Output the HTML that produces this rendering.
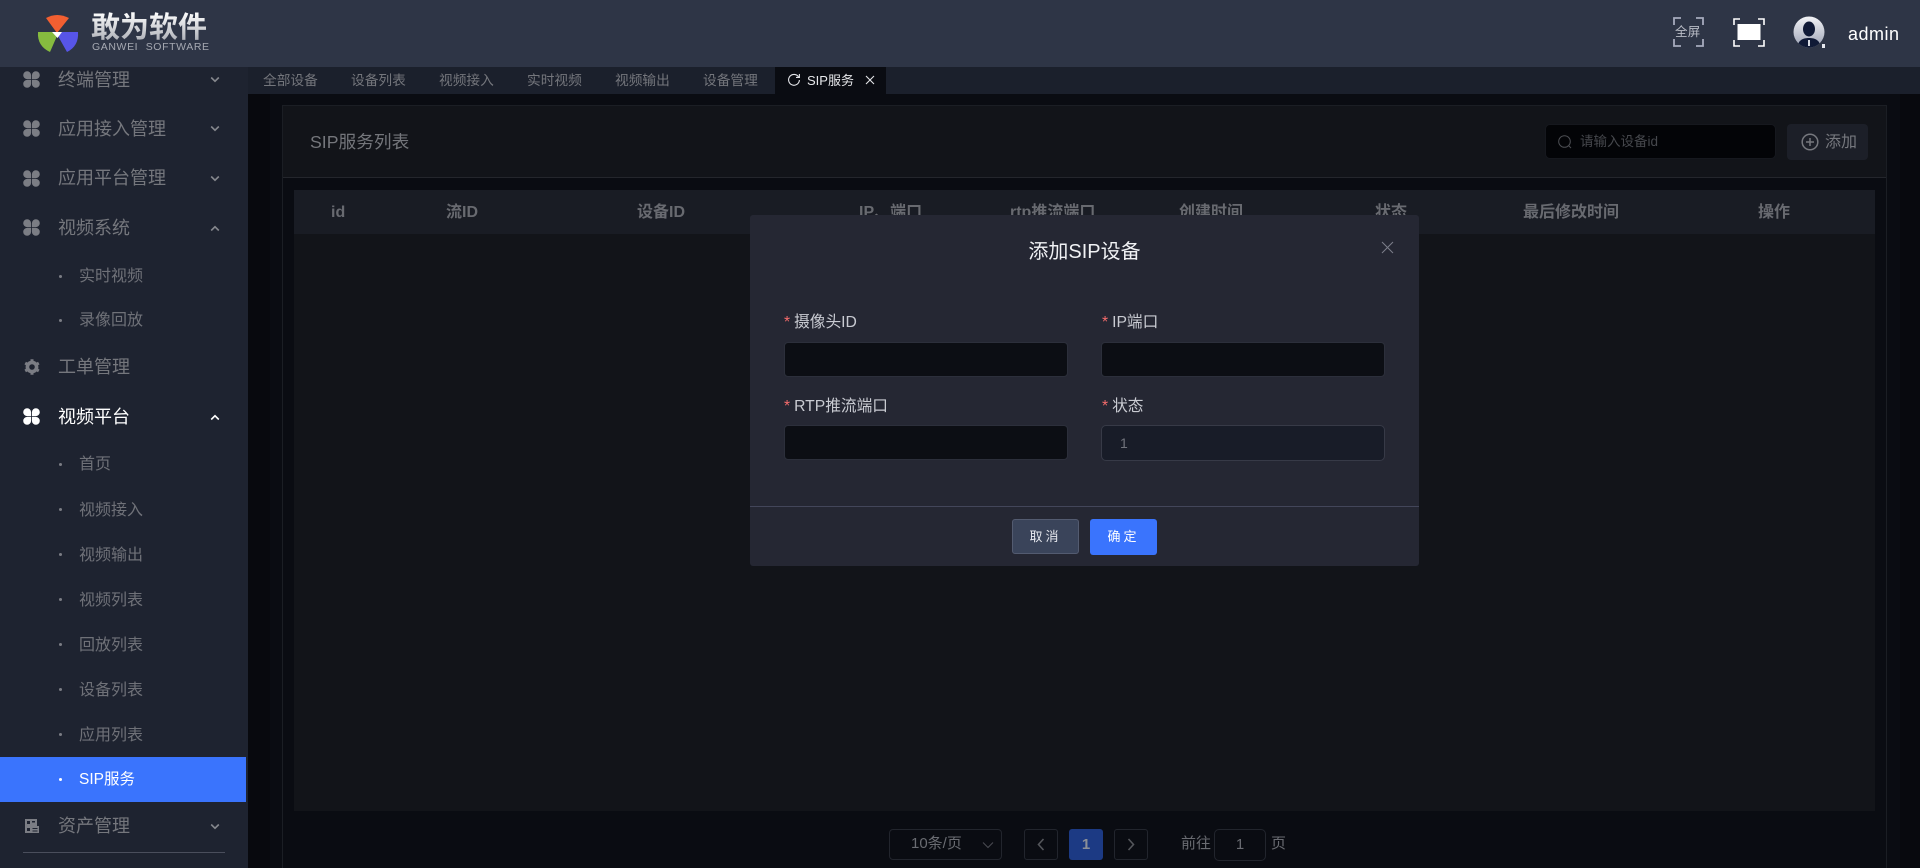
<!DOCTYPE html>
<html lang="zh-CN">
<head>
<meta charset="utf-8">
<title>SIP服务</title>
<style>
*{box-sizing:border-box;margin:0;padding:0}
html,body{width:1920px;height:868px;overflow:hidden;background:#0a0c12;font-family:"Liberation Sans","Noto Sans CJK SC",sans-serif}
.a{position:absolute;white-space:nowrap}
.t{position:absolute;white-space:nowrap;height:30px;line-height:30px}
#hd{left:0;top:0;width:1920px;height:67px;background:#2e3546}
#sb{left:0;top:67px;width:248px;height:801px;background:#1e2330}
#tb{left:248px;top:67px;width:1672px;height:27px;background:#1b202c}
.m{left:58px;font-size:18px;color:#75777d}
.s{left:79px;font-size:16px;color:#6f7178}
.dot{position:absolute;left:59px;width:3px;height:3px;border-radius:50%;background:#7b7d84}
.ic{position:absolute;left:23px;width:17px;height:17px}
.ch{position:absolute;left:210px;width:10px;height:7px}
.tab{font-size:13.7px;color:#74767c;top:66px}
.th{font-size:16px;font-weight:bold;color:#686a70;top:198px}
.lb{font-size:15.7px;color:#c9cbd2}
.lb i{color:#f56c6c;font-style:normal;margin-right:4px;font-family:"Liberation Sans",sans-serif}
.inp{position:absolute;width:284px;height:35px;background:#0c0e14;border:1px solid #2c2f3b;border-radius:4px}
</style>
</head>
<body>
<svg width="0" height="0" style="position:absolute">
<symbol id="cl" viewBox="0 0 16 16"><path d="M7.6 7.6H3.8A3.7 3.7 0 1 1 7.6 3.8ZM8.4 7.6V3.8A3.7 3.7 0 1 1 12.2 7.6ZM7.6 8.4V12.2A3.7 3.7 0 1 1 3.800 8.4ZM8.4 8.4H12.2A3.7 3.7 0 1 1 8.4 12.2Z" fill="currentColor"/></symbol>
<symbol id="dn" viewBox="0 0 10 7"><path d="M1.2 1.5 5 5.2 8.8 1.5" fill="none" stroke="currentColor" stroke-width="1.6"/></symbol>
<symbol id="up" viewBox="0 0 10 7"><path d="M1.2 5.5 5 1.8 8.8 5.5" fill="none" stroke="currentColor" stroke-width="1.6"/></symbol>
</svg>

<!-- main background -->
<div class="a" style="left:248px;top:94px;width:22px;height:774px;background:#08090e"></div>
<div class="a" style="left:1900px;top:94px;width:20px;height:774px;background:#08090e"></div>
<!-- card -->
<div class="a" style="left:282px;top:105px;width:1605px;height:763px;border:1px solid #1b1e24;border-bottom:0;background:#0a0c12"></div>
<div class="a" style="left:283px;top:106px;width:1603px;height:72px;background:#121419;border-bottom:1px solid #24262c"></div>
<div class="t" style="left:310px;top:127px;font-size:17.700px;color:#74767b">SIP服务列表</div>
<div class="a" style="left:1545px;top:124px;width:231px;height:35px;background:#030407;border:1px solid #16181e;border-radius:5px"></div>
<svg class="a" style="left:1557px;top:134px" width="16" height="16" viewBox="0 0 16 16"><circle cx="7.5" cy="7.5" r="5.8" fill="none" stroke="#4d4f54" stroke-width="1"/><path d="M11.8 11.8 14 14" stroke="#4d4f54" stroke-width="1"/></svg>
<div class="t" style="left:1580px;top:127px;font-size:13.5px;color:#46484d">请输入设备id</div>
<div class="a" style="left:1787px;top:124px;width:81px;height:36px;background:#1c1f28;border-radius:4px"></div>
<svg class="a" style="left:1801px;top:133px" width="18" height="18" viewBox="0 0 18 18"><circle cx="9" cy="9" r="7.8" fill="none" stroke="#76787e" stroke-width="1.5"/><path d="M9 5v8M5 9h8" stroke="#76787e" stroke-width="1.5"/></svg>
<div class="t" style="left:1825px;top:128px;font-size:16px;color:#76787e">添加</div>
<!-- table -->
<div class="a" style="left:294px;top:190px;width:1581px;height:44px;background:#191c24"></div>
<div class="a" style="left:294px;top:234px;width:1581px;height:577px;background:#121419"></div>
<div class="t th" style="left:331px">id</div>
<div class="t th" style="left:446px">流ID</div>
<div class="t th" style="left:637px">设备ID</div>
<div class="t th" style="left:859px">IP、端口</div>
<div class="t th" style="left:1010px">rtp推流端口</div>
<div class="t th" style="left:1179px">创建时间</div>
<div class="t th" style="left:1375px">状态</div>
<div class="t th" style="left:1523px">最后修改时间</div>
<div class="t th" style="left:1758px">操作</div>
<!-- pagination -->
<div class="a" style="left:889px;top:829px;width:113px;height:31px;border:1px solid #22252d;border-radius:4px"></div>
<div class="t" style="left:911px;top:829px;font-size:15px;color:#6a6c72">10条/页</div>
<svg class="a" style="left:982px;top:841px" width="12" height="8" viewBox="0 0 12 8"><path d="M1 1.500 6 6.500 11 1.500" fill="none" stroke="#4a4c52" stroke-width="1"/></svg>
<div class="a" style="left:1024px;top:829px;width:34px;height:31px;border:1px solid #22252d;border-radius:3px"></div>
<svg class="a" style="left:1036px;top:838px" width="10" height="13" viewBox="0 0 10 13"><path d="M7.5 1 2.5 6.5 7.5 12" fill="none" stroke="#54565b" stroke-width="1.6"/></svg>
<div class="a" style="left:1069px;top:829px;width:34px;height:31px;background:#1c3a84;border-radius:3px;text-align:center;line-height:31px;font-size:15px;font-weight:bold;color:#8b8f98">1</div>
<div class="a" style="left:1114px;top:829px;width:34px;height:31px;border:1px solid #22252d;border-radius:3px"></div>
<svg class="a" style="left:1126px;top:838px" width="10" height="13" viewBox="0 0 10 13"><path d="M2.5 1 7.5 6.5 2.5 12" fill="none" stroke="#54565b" stroke-width="1.6"/></svg>
<div class="t" style="left:1181px;top:829px;font-size:15px;color:#6a6c72">前往</div>
<div class="a" style="left:1214px;top:829px;width:52px;height:32px;border:1px solid #22252d;border-radius:5px;text-align:center;line-height:30px;font-size:15px;color:#6a6c72">1</div>
<div class="t" style="left:1271px;top:829px;font-size:15px;color:#6a6c72">页</div>

<!-- header -->
<div class="a" id="hd"></div>
<svg class="a" style="left:30px;top:8px" width="56" height="50" viewBox="30 8 56 50">
<path d="M57 33 46 18Q57 12 69 18Z" fill="#f25f31"/>
<path d="M38 32H52L57 36 50 52Q37 46 38 32Z" fill="#86bb3f"/>
<path d="M62 32H78Q79 46 67 52L58 36Z" fill="#5755e8"/>
<path d="M52 32H62L57.5 38Z" fill="#fff"/>
</svg>
<div class="a" style="left:91px;top:12px;height:32px;line-height:32px;font-size:29px;font-weight:bold;color:#d8dade;background:linear-gradient(#fff,#a5a8b0);-webkit-background-clip:text;background-clip:text;-webkit-text-fill-color:transparent">敢为软件</div>
<div class="a" style="left:92px;top:41px;height:13px;line-height:13px;font-size:10.500px;letter-spacing:.6px;color:#a6a9b2;word-spacing:4px">GANWEI SOFTWARE</div>
<svg class="a" style="left:1673px;top:17px" width="31" height="30" viewBox="0 0 31 30"><path d="M8 1H1V8M23 1H30V8M1 22V29H8M30 22V29H23" fill="none" stroke="#a6abbd" stroke-width="1.8"/></svg>
<div class="a" style="left:1675px;top:22px;width:28px;line-height:20px;height:20px;font-size:12.5px;color:#b9bcc6;letter-spacing:.2px">全屏</div>
<svg class="a" style="left:1733px;top:18px" width="32" height="29" viewBox="0 0 32 29"><path d="M7 1H1V7M25 1H31V7M1 22V28H7M31 22V28H25" fill="none" stroke="#fff" stroke-width="1.6"/><rect x="4.500" y="6" width="23" height="16" fill="#fff"/></svg>
<svg class="a" style="left:1793px;top:16px" width="33" height="33" viewBox="0 0 33 33">
<defs><linearGradient id="g" x1="0" y1="0" x2="0" y2="1"><stop offset="0" stop-color="#f2f3f6"/><stop offset="1" stop-color="#9ca2b4"/></linearGradient>
<clipPath id="c"><circle cx="16" cy="16" r="15.5"/></clipPath></defs>
<circle cx="16" cy="16" r="15.5" fill="url(#g)"/>
<g clip-path="url(#c)" fill="#101a36"><ellipse cx="16" cy="13" rx="6" ry="7.5"/><path d="M4 32C5 24 10 22 16 22S27 24 28 32Z"/></g>
<rect x="15" y="24" width="2" height="6" fill="#d9dce3"/>
<path d="M29 32V28L32 28V32Z" fill="#e6e8ee"/>
</svg>
<div class="t" style="left:1848px;top:19px;font-size:18px;color:#fff;letter-spacing:.5px">admin</div>

<!-- tabs -->
<div class="a" id="tb"></div>
<div class="t tab" style="left:263px">全部设备</div>
<div class="t tab" style="left:351px">设备列表</div>
<div class="t tab" style="left:439px">视频接入</div>
<div class="t tab" style="left:527px">实时视频</div>
<div class="t tab" style="left:615px">视频输出</div>
<div class="t tab" style="left:703px">设备管理</div>
<div class="a" style="left:775px;top:67px;width:111px;height:27px;background:#0a0c12"></div>
<svg class="a" style="left:787px;top:73px" width="14" height="14" viewBox="0 0 14 14"><path d="M11.6 4A5.4 5.4 0 1 0 12.4 7" fill="none" stroke="#e3e4e8" stroke-width="1.1"/><path d="M12.4 1V4.4H9" fill="none" stroke="#e3e4e8" stroke-width="1.1"/></svg>
<div class="t tab" style="left:807px;color:#e6e7ea;font-size:13px">SIP服务</div>
<svg class="a" style="left:865px;top:75px" width="10" height="10" viewBox="0 0 10 10"><path d="M1 1 9 9M9 1 1 9" stroke="#e3e4e8" stroke-width="1.1"/></svg>

<!-- sidebar -->
<div class="a" id="sb"></div>
<div class="a" style="left:0;top:757px;width:246px;height:45px;background:#3a74fd"></div>
<svg class="ic" style="top:71px;color:#7b7d84"><use href="#cl"/></svg>
<div class="t m" style="top:65px">终端管理</div>
<svg class="ch" style="top:76px;color:#85878d"><use href="#dn"/></svg>
<svg class="ic" style="top:120px;color:#7b7d84"><use href="#cl"/></svg>
<div class="t m" style="top:114px">应用接入管理</div>
<svg class="ch" style="top:125px;color:#85878d"><use href="#dn"/></svg>
<svg class="ic" style="top:170px;color:#7b7d84"><use href="#cl"/></svg>
<div class="t m" style="top:163px">应用平台管理</div>
<svg class="ch" style="top:175px;color:#85878d"><use href="#dn"/></svg>
<svg class="ic" style="top:219px;color:#7b7d84"><use href="#cl"/></svg>
<div class="t m" style="top:213px">视频系统</div>
<svg class="ch" style="top:225px;color:#85878d"><use href="#up"/></svg>
<div class="dot" style="top:275px"></div>
<div class="t s" style="top:262px">实时视频</div>
<div class="dot" style="top:319px"></div>
<div class="t s" style="top:306px">录像回放</div>
<svg class="a" style="left:24px;top:359px" width="16" height="16" viewBox="0 0 16 16"><circle cx="8" cy="8" r="4.6" fill="none" stroke="#7b7d84" stroke-width="3.6"/><path d="M8 .2v3M8 12.800v3M1.200 4.100l2.600 1.500M12.200 10.400l2.600 1.500M1.200 11.900l2.600-1.500M12.200 5.600l2.600-1.500" stroke="#7b7d84" stroke-width="3"/></svg>
<div class="t m" style="top:352px">工单管理</div>
<svg class="ic" style="top:408px;color:#fff"><use href="#cl"/></svg>
<div class="t m" style="top:402px;color:#fff">视频平台</div>
<svg class="ch" style="top:414px;color:#fff"><use href="#up"/></svg>
<div class="dot" style="top:463px"></div>
<div class="t s" style="top:450px">首页</div>
<div class="dot" style="top:508px"></div>
<div class="t s" style="top:496px">视频接入</div>
<div class="dot" style="top:553px"></div>
<div class="t s" style="top:541px">视频输出</div>
<div class="dot" style="top:598px"></div>
<div class="t s" style="top:586px">视频列表</div>
<div class="dot" style="top:643px"></div>
<div class="t s" style="top:631px">回放列表</div>
<div class="dot" style="top:688px"></div>
<div class="t s" style="top:676px">设备列表</div>
<div class="dot" style="top:733px"></div>
<div class="t s" style="top:721px">应用列表</div>
<div class="dot" style="top:778px;background:#fff"></div>
<div class="t s" style="top:765px;color:#fff;font-size:15.5px">SIP服务</div>
<svg class="a" style="left:24px;top:818px" width="16" height="16" viewBox="0 0 16 16"><path d="M1 1H13V8H15V15H1Z" fill="#7b7d84"/><rect x="3" y="3" width="3" height="3" fill="#1e2330"/><rect x="8" y="3" width="3" height="1.500" fill="#1e2330"/><rect x="3" y="10" width="3" height="3" fill="#1e2330"/><rect x="8.500" y="10" width="5" height="1" fill="#1e2330"/><rect x="8.500" y="12.500" width="5" height="1" fill="#1e2330"/></svg>
<div class="t m" style="top:811px">资产管理</div>
<svg class="ch" style="top:823px;color:#85878d"><use href="#dn"/></svg>
<div class="a" style="left:23px;top:852px;width:202px;height:1px;background:#4a4e5c"></div>

<!-- dialog -->
<div class="a" style="left:750px;top:215px;width:669px;height:351px;background:#252733;border-radius:3px"></div>
<div class="a" style="left:750px;top:237px;width:669px;text-align:center;height:30px;line-height:30px;font-size:20px;color:#f0f1f4">添加SIP设备</div>
<svg class="a" style="left:1381px;top:241px" width="13" height="13" viewBox="0 0 13 13"><path d="M1 1 12 12M12 1 1 12" stroke="#7c7f8b" stroke-width="1"/></svg>
<div class="t lb" style="left:784px;top:308px"><i>*</i>摄像头ID</div>
<div class="t lb" style="left:1102px;top:308px"><i>*</i>IP端口</div>
<div class="inp" style="left:784px;top:342px"></div>
<div class="inp" style="left:1101px;top:342px"></div>
<div class="t lb" style="left:784px;top:392px"><i>*</i>RTP推流端口</div>
<div class="t lb" style="left:1102px;top:392px"><i>*</i>状态</div>
<div class="inp" style="left:784px;top:425px"></div>
<div class="inp" style="left:1101px;top:425px;height:36px;background:#181c28;border-color:#373a47;border-radius:5px;padding-left:18px;line-height:34px;font-size:14px;color:#70737c">1</div>
<div class="a" style="left:750px;top:506px;width:669px;height:1px;background:#43465a"></div>
<div class="a" style="left:1012px;top:519px;width:67px;height:35px;background:#3a445a;border:1px solid #535b70;border-radius:3px;text-align:center;line-height:33px;font-size:13px;letter-spacing:3px;color:#e6e8ee">取消</div>
<div class="a" style="left:1090px;top:519px;width:67px;height:36px;background:#3a74fd;border-radius:3px;text-align:center;line-height:35px;font-size:13px;letter-spacing:3px;color:#fff">确定</div>
</body>
</html>
